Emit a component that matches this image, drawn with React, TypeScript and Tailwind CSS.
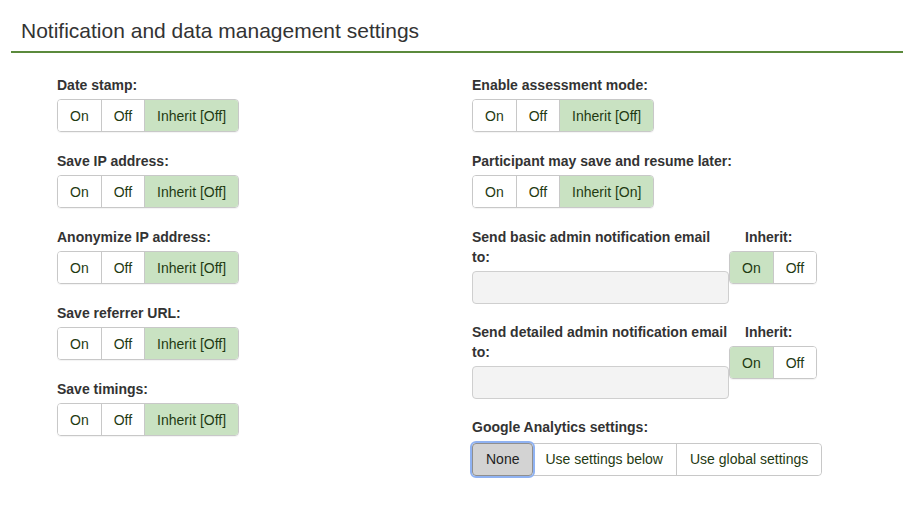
import React from "react";

type Opt = { label: string; active?: boolean };

function ButtonGroup({ options }: { options: Opt[] }) {
  return (
    <div className="inline-flex h-[33px] rounded-[4px] overflow-hidden border border-[#c8c8c8] shadow-[0_1px_1px_rgba(0,0,0,0.05)]">
      {options.map((o, i) => (
        <button
          key={o.label}
          className={
            "px-3 text-[14px] text-[#1f3a12] leading-none " +
            (i > 0 ? "border-l border-[#c8c8c8] " : "") +
            (o.active ? "bg-[#c9e2c2]" : "bg-white")
          }
        >
          {o.label}
        </button>
      ))}
    </div>
  );
}

function ToggleField({ label, inherit }: { label: string; inherit: string }) {
  return (
    <div className="mb-[19px]">
      <div className="text-[14px] font-bold text-[#333] leading-5">{label}</div>
      <div className="mt-1">
        <ButtonGroup
          options={[
            { label: "On" },
            { label: "Off" },
            { label: `Inherit [${inherit}]`, active: true },
          ]}
        />
      </div>
    </div>
  );
}

function EmailField({ label }: { label: string }) {
  return (
    <div className="flex mb-[18px]">
      <div className="w-[257px]">
        <div className="text-[14px] font-bold text-[#333] leading-5 whitespace-nowrap">
          {label}
          <br />
          to:
        </div>
        <div className="mt-1 h-[33px] rounded-[4px] border border-[#cfcfcf] bg-[#f3f3f3]" />
      </div>
      <div>
        <div className="text-[14px] font-bold text-[#333] leading-5 pl-4">Inherit:</div>
        <div className="mt-1">
          <ButtonGroup options={[{ label: "On", active: true }, { label: "Off" }]} />
        </div>
      </div>
    </div>
  );
}

export default function App() {
  return (
    <div className="min-h-[528px] bg-white pl-[11px] pr-[8px] pt-[18px]" style={{ fontFamily: '"Liberation Sans", Arial, sans-serif' }}>
      <div className="border-b-2 border-[#5b8a3c] pb-[7px] pl-[10px]">
        <h2 className="text-[21px] leading-[26px] text-[#333]">Notification and data management settings</h2>
      </div>
      <div className="grid grid-cols-[415px_1fr] pl-[46px] pt-[22px]">
        <div>
          <ToggleField label="Date stamp:" inherit="Off" />
          <ToggleField label="Save IP address:" inherit="Off" />
          <ToggleField label="Anonymize IP address:" inherit="Off" />
          <ToggleField label="Save referrer URL:" inherit="Off" />
          <ToggleField label="Save timings:" inherit="Off" />
        </div>
        <div>
          <ToggleField label="Enable assessment mode:" inherit="Off" />
          <ToggleField label="Participant may save and resume later:" inherit="On" />
          <EmailField label="Send basic admin notification email" />
          <EmailField label="Send detailed admin notification email" />
          <div>
            <div className="text-[14px] font-bold text-[#333] leading-5">Google Analytics settings:</div>
            <div className="mt-[6px] inline-flex h-[33px] rounded-[4px] border border-[#c8c8c8]">
              <button className="px-[13px] text-[14px] text-[#222] bg-[#d3d3d3] border border-[#8f8f8f] rounded-[4px] -m-px outline outline-2 outline-[#8fb2f2] relative z-10">
                None
              </button>
              <button className="px-[13px] text-[14px] text-[#1f3a12] bg-white border-r border-[#c8c8c8]">
                Use settings below
              </button>
              <button className="px-[13px] text-[14px] text-[#1f3a12] bg-white rounded-r-[4px]">
                Use global settings
              </button>
            </div>
          </div>
        </div>
      </div>
    </div>
  );
}
